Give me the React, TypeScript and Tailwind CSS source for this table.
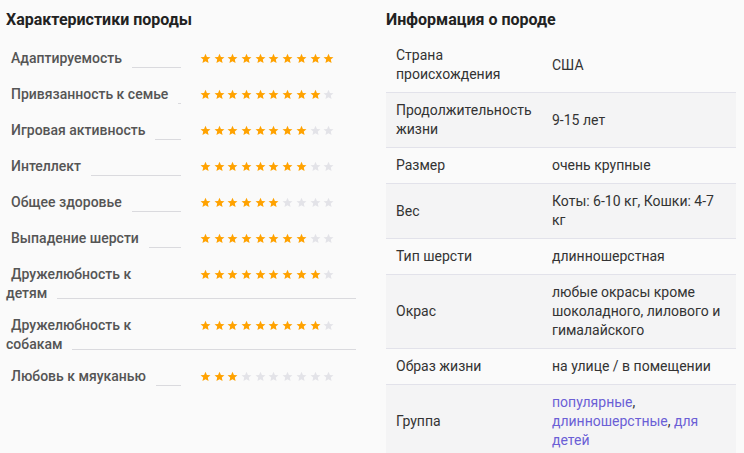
import React from "react";

type Trait = { label: string; tail?: string; rating: number };

const traits: Trait[] = [
  { label: "Адаптируемость", rating: 10 },
  { label: "Привязанность к семье", rating: 9 },
  { label: "Игровая активность", rating: 8 },
  { label: "Интеллект", rating: 8 },
  { label: "Общее здоровье", rating: 6 },
  { label: "Выпадение шерсти", rating: 8 },
  { label: "Дружелюбность к", tail: "детям", rating: 9 },
  { label: "Дружелюбность к", tail: "собакам", rating: 9 },
  { label: "Любовь к мяуканью", rating: 3 },
];

type Info = { label: string; value: React.ReactNode };

const linkCls = "text-[#6b5fd6]";

const info: Info[] = [
  { label: "Страна происхождения", value: "США" },
  { label: "Продолжительность жизни", value: "9-15 лет" },
  { label: "Размер", value: "очень крупные" },
  { label: "Вес", value: "Коты: 6-10 кг, Кошки: 4-7 кг" },
  { label: "Тип шерсти", value: "длинношерстная" },
  { label: "Окрас", value: "любые окрасы кроме шоколадного, лилового и гималайского" },
  { label: "Образ жизни", value: "на улице / в помещении" },
  {
    label: "Группа",
    value: (
      <>
        <a className={linkCls}>популярные</a>, <a className={linkCls}>длинношерстные</a>,{" "}
        <a className={linkCls}>для детей</a>
      </>
    ),
  },
];

function Star({ on }: { on: boolean }) {
  return (
    <svg viewBox="0 0 24 24" className="w-[11px] h-[11px]">
      <path
        d="M12 1.5l3.1 7.1 7.7.7-5.8 5.1 1.7 7.6L12 18l-6.7 4 1.7-7.6-5.8-5.1 7.7-.7z"
        fill={on ? "#ffa200" : "#e3e3e8"}
      />
    </svg>
  );
}

function Stars({ rating }: { rating: number }) {
  return (
    <div className="ml-[19px] flex h-5 items-center gap-[2.7px] pt-px">
      {Array.from({ length: 10 }).map((_, i) => (
        <Star key={i} on={i < rating} />
      ))}
    </div>
  );
}

function TraitRow({ t }: { t: Trait }) {
  if (t.tail) {
    return (
      <div className="h-[51px] pt-2">
        <div className="flex h-5">
          <div className="w-[175px] pl-[5px] leading-5">{t.label}</div>
          <Stars rating={t.rating} />
        </div>
        <div className="flex w-[350px] h-[19px]">
          <span className="leading-[19px]">{t.tail}</span>
          <div className="ml-[10px] h-[15px] flex-1 border-b border-[#dadade]" />
        </div>
      </div>
    );
  }
  return (
    <div className="flex h-9 pt-2">
      <div className="flex w-[175px]">
        <span className="pl-[5px] leading-5 whitespace-nowrap">{t.label}</span>
        <div className="ml-[10px] h-5 flex-1 border-b border-[#dadade]" />
      </div>
      <Stars rating={t.rating} />
    </div>
  );
}

export default function App() {
  return (
    <div
      className="flex min-h-screen bg-[#fafafa] text-[14px]"
      style={{ fontFamily: "Roboto, 'Liberation Sans', sans-serif" }}
    >
      <div className="w-[386px] shrink-0 pl-[6px] pt-2">
        <h2 className="h-6 text-base font-bold leading-6 text-[#222]">Характеристики породы</h2>
        <div className="mt-2 font-medium text-[#555]">
          {traits.map((t, i) => (
            <TraitRow key={i} t={t} />
          ))}
        </div>
      </div>

      <div className="w-[350px] shrink-0 pt-2">
        <h2 className="h-6 text-base font-bold leading-6 text-[#222]">Информация о породе</h2>
        <div className="mt-[6px] text-[#333] leading-[19px]">
          {info.map((r, i) => (
            <div
              key={i}
              className={
                "grid grid-cols-[166px_184px] items-center py-2 " +
                (i > 0 ? "border-t border-[#e2e2ea] " : "") +
                (i % 2 === 1 ? "bg-[#f4f4f5]" : "")
              }
            >
              <div className="pl-[10px] pr-[12px]">{r.label}</div>
              <div className="pr-[11px]">{r.value}</div>
            </div>
          ))}
        </div>
      </div>
    </div>
  );
}
